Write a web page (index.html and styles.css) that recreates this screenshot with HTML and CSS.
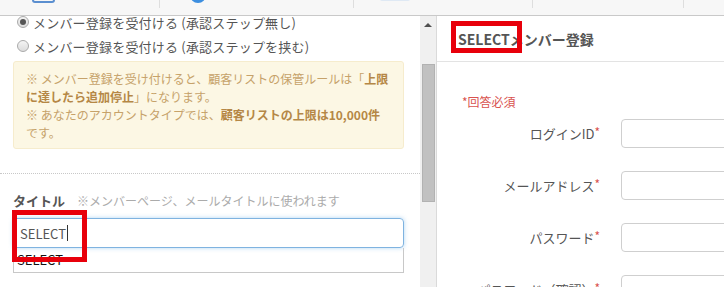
FILE: index.html
```html
<!DOCTYPE html>
<html lang="ja">
<head>
<meta charset="utf-8">
<link rel="stylesheet" href="styles.css">
</head>
<body>
<div class="topbar">
  <div class="tab tab1"><span class="ico ico-sq"></span></div>
  <div class="tab tab2"><span class="ico ico-circle"></span></div>
  <div class="tab tab3"><span class="ico ico-faint"></span></div>
  <div class="tab tab4"></div>
  <div class="tab tab5"></div>
</div>
<div class="main">
  <div class="left">
    <div class="left-inner">
      <label class="radio-row"><span class="radio checked"></span>メンバー登録を受付ける (承認ステップ無し)</label>
      <label class="radio-row"><span class="radio"></span>メンバー登録を受付ける (承認ステップを挟む)</label>
      <div class="alert">
        <p>※ メンバー登録を受け付けると、顧客リストの保管ルールは「<b>上限</b></p>
        <p><b>に達したら追加停止</b>」になります。</p>
        <p>※ あなたのアカウントタイプでは、<b>顧客リストの上限は10,000件</b></p>
        <p>です。</p>
      </div>
      <div class="sep"></div>
      <div class="field-label"><span class="lbl">タイトル</span><span class="hint">※メンバーページ、メールタイトルに使われます</span></div>
      <div class="title-input">SELECT<span class="caret"></span></div>
      <div class="suggest">SELECT</div>
    </div>
    <div class="mark mark-left"></div>
  </div>
  <div class="scrollbar">
    <div class="sb-arrow"></div>
    <div class="sb-thumb"></div>
  </div>
  <div class="right">
    <div class="preview-head">SELECTメンバー登録</div>
    <div class="preview-body">
      <div class="required">*回答必須</div>
      <div class="form-grid">
        <div class="f-label">ログインID<span class="ast">*</span></div>
        <div class="f-input"></div>
        <div class="f-label">メールアドレス<span class="ast">*</span></div>
        <div class="f-input"></div>
        <div class="f-label">パスワード<span class="ast">*</span></div>
        <div class="f-input"></div>
        <div class="f-label">パスワード（確認）<span class="ast">*</span></div>
        <div class="f-input"></div>
      </div>
    </div>
    <div class="mark mark-right"></div>
  </div>
</div>
</body>
</html>
```
FILE: styles.css
```css
* { box-sizing: border-box; }
html, body {
  margin: 0;
  padding: 0;
  width: 724px;
  height: 287px;
  overflow: hidden;
  background: #fff;
  font-family: "Noto Sans CJK JP", "Noto Sans", sans-serif;
  color: #555;
}
.topbar {
  height: 16px;
  background: #f7f7f7;
  border-bottom: 1px solid #c9c9c9;
  display: flex;
  align-items: flex-start;
  overflow: hidden;
}
.tab {
  height: 8px;
  border-right: 1px solid #dedede;
  display: flex;
  align-items: flex-start;
}
.tab1 { width: 160px; }
.tab2 { width: 194px; }
.tab3 { width: 179px; }
.tab4 { width: 151px; }
.tab5 { flex: 1; border-right: none; }
.ico { display: block; }
.ico-sq {
  margin-left: 32px;
  margin-top: -10px;
  width: 23px;
  height: 13px;
  border: 2px solid #5b8fd0;
  border-radius: 3px;
}
.ico-circle {
  margin-left: 30px;
  margin-top: -13px;
  width: 16px;
  height: 16px;
  border-radius: 50%;
  background: #3d8fe0;
}
.ico-faint {
  margin-left: 26px;
  margin-top: -9px;
  width: 30px;
  height: 10px;
  background: #dfe9f4;
  border-radius: 2px;
}
.main {
  display: flex;
  height: 271px;
}
.left {
  width: 420px;
  flex: none;
  overflow: hidden;
  position: relative;
}
.left-inner {
  margin-top: -6px;
}
.radio-row {
  display: flex;
  align-items: center;
  height: 24px;
  padding-left: 17px;
  font-size: 13px;
  letter-spacing: 0.2px;
  color: #555;
  white-space: nowrap;
}
.radio {
  width: 12px;
  height: 12px;
  border-radius: 50%;
  border: 1px solid #aaa;
  background: linear-gradient(#f4f4f4, #dcdcdc);
  margin-right: 4px;
  position: relative;
  flex: none;
}
.radio.checked::after {
  content: "";
  position: absolute;
  left: 2px;
  top: 2px;
  width: 6px;
  height: 6px;
  border-radius: 50%;
  background: #555;
}
.alert {
  margin: 3px 16px 0 13px;
  height: 88px;
  padding: 8px 12px;
  background: #fcf7e4;
  border: 1px solid #f6eccd;
  border-radius: 3px;
  color: #c6a26a;
  font-size: 12px;
  line-height: 18px;
  white-space: nowrap;
}
.alert p { margin: 0; }
.alert b { color: #b58746; }
.sep {
  margin-top: 24px;
  border-top: 1px dotted #c8c8c8;
}
.field-label {
  margin: 16px 0 0 13px;
  height: 20px;
  display: flex;
  align-items: center;
  white-space: nowrap;
}
.lbl {
  font-size: 13px;
  font-weight: bold;
  color: #555;
  margin-right: 12px;
}
.hint {
  font-size: 12px;
  color: #ababab;
}
.title-input {
  margin: 8px 16px 0 13px;
  height: 30px;
  border: 1px solid #7fb3e0;
  border-radius: 4px;
  box-shadow: 0 0 4px rgba(102, 175, 233, 0.5);
  padding-left: 6px;
  display: flex;
  align-items: center;
  font-size: 13px;
  color: #555;
}
.caret {
  display: inline-block;
  width: 1px;
  height: 16px;
  background: #333;
  margin-left: 1px;
}
.suggest {
  margin: 0 16px 0 13px;
  height: 25px;
  border: 1px solid #c8c8c8;
  border-top: none;
  padding-left: 3px;
  font-size: 13px;
  color: #111;
  line-height: 24px;
}
.mark {
  position: absolute;
  border: 5px solid #e8000b;
  pointer-events: none;
}
.mark-left {
  left: 12px;
  top: 194px;
  width: 75px;
  height: 52px;
}
.scrollbar {
  width: 17px;
  flex: none;
  background: #f0f0f0;
  border-right: 1px solid #dadada;
  position: relative;
}
.sb-arrow {
  margin: 7px auto 0;
  width: 0;
  height: 0;
  border-left: 4px solid transparent;
  border-right: 4px solid transparent;
  border-bottom: 4px solid #505050;
}
.sb-thumb {
  margin: 37px 0 0 2px;
  width: 13px;
  height: 138px;
  background: #c1c1c1;
  border: 1px solid #b2b2b2;
}
.right {
  flex: 1;
  position: relative;
  overflow: hidden;
}
.preview-head {
  height: 46px;
  border-bottom: 1px solid #e3e3e3;
  padding-left: 21px;
  display: flex;
  align-items: center;
  font-size: 14px;
  font-weight: bold;
  color: #555;
  white-space: nowrap;
}
.preview-body {
  padding: 31px 0 0 25px;
}
.required {
  color: #d9534f;
  font-size: 12px;
  line-height: 18px;
}
.form-grid {
  margin-top: 8px;
  display: grid;
  grid-template-columns: 138px 300px;
  column-gap: 21px;
  row-gap: 23px;
}
.f-label {
  height: 29px;
  display: flex;
  align-items: center;
  justify-content: flex-end;
  font-size: 13px;
  color: #555;
  white-space: nowrap;
}
.ast {
  color: #d9534f;
  font-size: 12px;
  align-self: flex-start;
  margin-top: 4px;
}
.f-input {
  height: 29px;
  border: 1px solid #cfcfcf;
  border-radius: 4px;
}
.mark-right {
  left: 14px;
  top: 5px;
  width: 71px;
  height: 32px;
}
```
